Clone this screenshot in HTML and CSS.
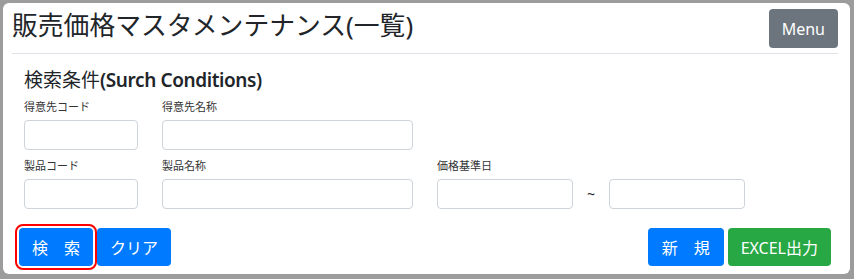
FILE: index.html
```html
<!DOCTYPE html>
<html lang="ja">
<head>
<meta charset="utf-8">
<title>販売価格マスタメンテナンス(一覧)</title>
<link rel="stylesheet" href="styles.css">
</head>
<body>
<div class="panel">
  <div class="header">
    <h1 class="page-title">販売価格マスタメンテナンス(一覧)</h1>
    <button class="btn btn-gray">Menu</button>
  </div>

  <div class="search">
    <h2 class="search-title">検索条件<span class="en">(Surch Conditions)</span></h2>
    <div class="row">
      <div class="field w-code">
        <label>得意先コード</label>
        <input type="text">
      </div>
      <div class="field w-name">
        <label>得意先名称</label>
        <input type="text">
      </div>
    </div>
    <div class="row">
      <div class="field w-code">
        <label>製品コード</label>
        <input type="text">
      </div>
      <div class="field w-name">
        <label>製品名称</label>
        <input type="text">
      </div>
      <div class="field">
        <label>価格基準日</label>
        <div class="range">
          <input type="text" class="w-date">
          <span class="tilde">~</span>
          <input type="text" class="w-date">
        </div>
      </div>
    </div>
  </div>

  <div class="actions">
    <div class="group">
      <button class="btn btn-blue focused">検　索</button>
      <button class="btn btn-blue">クリア</button>
    </div>
    <div class="group">
      <button class="btn btn-blue btn-wide">新　規</button>
      <button class="btn btn-green">EXCEL出力</button>
    </div>
  </div>
</div>
</body>
</html>
```

FILE: styles.css
```css
body {
  margin: 0;
  padding: 3px 4px 5px 3px;
  background: #9c9c9c;
  font-family: "Noto Sans", "Noto Sans CJK JP", sans-serif;
  color: #212529;
}
.panel {
  box-sizing: border-box;
  height: 271px;
  background: #fff;
  border-radius: 6px;
  padding: 6px 12px 0 9px;
}

/* header */
.header {
  display: flex;
  justify-content: space-between;
  align-items: center;
  padding-bottom: 5px;
  border-bottom: 1px solid #dee2e6;
}
.page-title {
  margin: 0;
  font-size: 25.8px;
  font-weight: normal;
  line-height: 1.2;
  margin-top: -6px;
}

/* buttons */
.btn {
  box-sizing: border-box;
  height: 38px;
  padding: 0 13px;
  border: none;
  border-radius: 4px;
  font-family: inherit;
  font-size: 16px;
  color: #fff;
}
.btn-gray {
  height: 39px;
  background: #6c757d;
}
.btn-blue {
  background: #007bff;
}
.btn-wide {
  padding: 0 14px;
}
.btn-green {
  background: #28a745;
}
.btn.focused {
  outline: 2px solid #f00;
  outline-offset: 2px;
}

/* search */
.search {
  padding-left: 12px;
}
.search-title {
  margin: 15px 0 6px;
  font-size: 19px;
  font-weight: normal;
  line-height: 1.2;
}
.search-title .en {
  font-weight: 600;
  letter-spacing: -0.4px;
}
.row {
  display: flex;
  gap: 24px;
  margin-bottom: 7px;
}
.field label {
  display: block;
  font-size: 11px;
  line-height: 17px;
  margin-bottom: 5px;
  color: #333;
}
.field input {
  display: block;
  box-sizing: border-box;
  height: 30px;
  border: 1px solid #ced4da;
  border-radius: 4px;
}
.w-code input {
  width: 114px;
}
.w-name input {
  width: 251px;
}
.range {
  display: flex;
  align-items: center;
}
.range .w-date {
  width: 136px;
}
.tilde {
  width: 36px;
  text-align: center;
  font-size: 14px;
}

/* bottom buttons */
.actions {
  display: flex;
  justify-content: space-between;
  margin-top: 19px;
  padding: 0 7px;
}
.group {
  display: flex;
  gap: 4px;
}
```
